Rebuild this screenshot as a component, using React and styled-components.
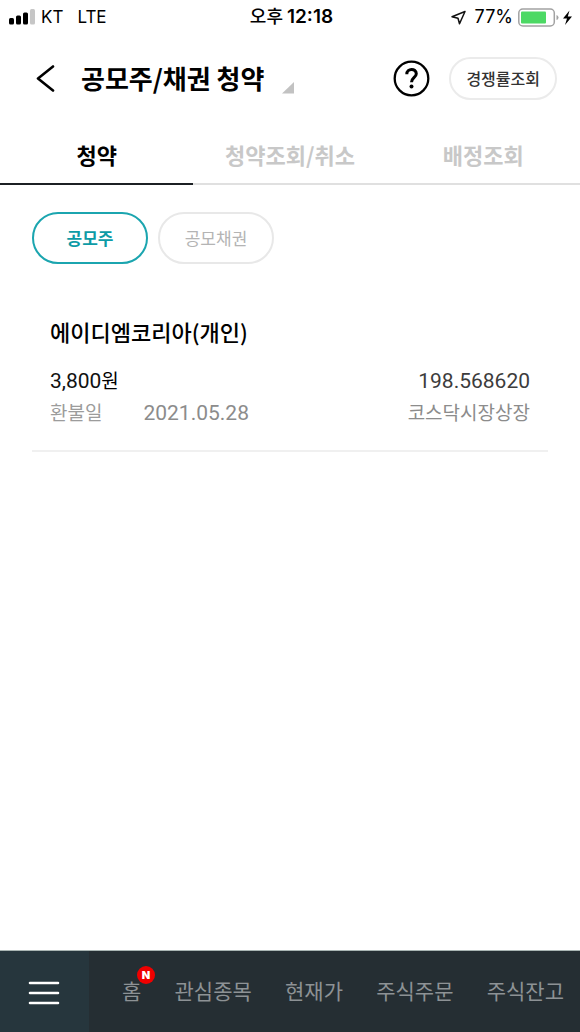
import React from "react";
import styled, { createGlobalStyle } from "styled-components";

const GlobalStyle = createGlobalStyle`
  *, *::before, *::after { box-sizing: border-box; }
  body {
    margin: 0;
    background: #fff;
    color: #000;
    font-family: "Noto Sans CJK KR", sans-serif;
  }
  button { font: inherit; color: inherit; border: 0; background: none; padding: 0; cursor: pointer; }
  h1, h2, p, dl, dt, dd, ul { margin: 0; padding: 0; }
  ul { list-style: none; }
`;

const Screen = styled.div`
  display: flex;
  flex-direction: column;
  min-height: 100vh;
`;

const StatusBar = styled.div`
  display: grid;
  grid-template-columns: 1fr auto 1fr;
  align-items: center;
  height: 32px;
  padding: 0 8px;
  font-family: Inter, "Noto Sans CJK KR", sans-serif;
  font-size: 18px;
  line-height: 34px;
`;

const StatusGroup = styled.div`
  display: flex;
  align-items: center;
  justify-content: ${(p) => (p.$end ? "flex-end" : "flex-start")};
`;

const Carrier = styled.span`
  display: flex;
  gap: 14px;
  margin-left: 6px;
  font-size: 17px;
`;

const Clock = styled.span`
  display: flex;
  gap: 4px;
  padding-left: 3px;
  font-weight: 500;
  strong { font-size: 19px; font-weight: 600; }
`;

const Percent = styled.span`
  margin: 0 5px 0 9px;
`;

const Header = styled.header`
  display: flex;
  align-items: center;
  height: 96px;
  padding: 0 23px 4px 36px;
`;

const BackButton = styled.button`
  display: flex;
  margin-right: 25px;
`;

const TitleButton = styled.button`
  display: flex;
  align-items: flex-end;
  gap: 18px;
  margin-right: auto;
`;

const Title = styled.h1`
  font-size: 26px;
  font-weight: 700;
  line-height: 36px;
`;

const HelpButton = styled.button`
  display: flex;
  margin-right: 19px;
`;

const RateButton = styled.button`
  height: 43px;
  padding: 0 15px;
  border: 2px solid #ebebeb;
  border-radius: 22px;
  color: #333;
  font-size: 16px;
  font-weight: 500;
  line-height: 36px;
`;

const Tabs = styled.nav`
  display: grid;
  grid-template-columns: repeat(3, 1fr);
`;

const Tab = styled.button`
  height: 57px;
  padding-bottom: 4px;
  border-bottom: 2px solid ${(p) => (p.$active ? "#1c2024" : "#e0e0e0")};
  color: ${(p) => (p.$active ? "#000" : "#c8c8c8")};
  font-size: 22px;
  font-weight: 700;
  line-height: 32px;
`;

const Main = styled.main`
  flex: 1;
  padding: 27px 32px;
`;

const Chips = styled.div`
  display: flex;
  gap: 10px;
`;

const Chip = styled.button`
  width: 116px;
  height: 52px;
  padding-bottom: 2px;
  border: 2px solid ${(p) => (p.$active ? "#1ba5af" : "#e8e8e8")};
  border-radius: 28px;
  color: ${(p) => (p.$active ? "#0d9ba6" : "#b4b4b4")};
  font-size: 17px;
  font-weight: ${(p) => (p.$active ? 700 : 400)};
`;

const Offering = styled.li`
  margin-top: 49px;
  padding: 0 18px 22px;
  border-bottom: 2px solid #f0f0f0;
`;

const Company = styled.h2`
  font-size: 22px;
  font-weight: 500;
  line-height: 36px;
`;

const Row = styled.div`
  display: flex;
  justify-content: space-between;
  height: 32px;
  margin-top: ${(p) => (p.$first ? "15px" : "0")};
  line-height: 32px;
  font-size: 19px;
`;

const Num = styled.span`
  font-family: Roboto, sans-serif;
  font-size: 21px;
  line-height: 34px;
  color: ${(p) => p.$color};
`;

const Refund = styled.dl`
  display: flex;
  gap: 41px;
  color: #9c9c9c;
`;

const Market = styled.span`
  color: #8c8c8c;
`;

const BottomBar = styled.nav`
  display: flex;
  height: 82px;
  border-top: 1px solid #a9b5b3;
  background: #252e33;
`;

const MenuButton = styled.button`
  display: flex;
  align-items: center;
  justify-content: center;
  width: 89px;
  padding: 2px 2px 0 0;
  background: #26363d;
`;

const Links = styled.div`
  display: flex;
  flex: 1;
  align-items: center;
  justify-content: space-between;
  padding: 0 16px 4px 33px;
`;

const NavLink = styled.a`
  position: relative;
  color: #8d9295;
  font-size: 21px;
  line-height: 32px;
  text-decoration: none;
`;

const NewBadge = styled.span`
  position: absolute;
  top: -8px;
  left: 15px;
  width: 18px;
  height: 18px;
  border-radius: 50%;
  background: #f00000;
  color: #fff;
  font-family: Inter, sans-serif;
  font-size: 11px;
  font-weight: 900;
  line-height: 18px;
  text-align: center;
`;

function Signal() {
  return (
    <svg width="27" height="16" viewBox="0 0 27 16" aria-hidden="true">
      <rect x="1" y="9" width="5" height="6.500" rx="1.500" />
      <rect x="8" y="6.500" width="5" height="9" rx="1.500" />
      <rect x="15" y="3.500" width="5" height="12" rx="1.500" />
      <rect x="22" y="0" width="5" height="15.500" rx="1.500" fill="#c6c6c6" />
    </svg>
  );
}

function LocationArrow() {
  return (
    <svg width="15" height="15" viewBox="0 0 15 15" fill="none" stroke="#111" strokeWidth="1.500" strokeLinejoin="round" aria-hidden="true">
      <path d="M14 1.500 1 6.800 7 8.200 8.500 13.800Z" />
    </svg>
  );
}

function Battery() {
  return (
    <svg width="54" height="19" viewBox="0 0 54 19" aria-hidden="true">
      <rect x="0.800" y="1" width="35.500" height="17" rx="4" fill="none" stroke="#a2a2a2" strokeWidth="1.500" />
      <rect x="3" y="3.500" width="25" height="12" rx="1" fill="#4cd964" />
      <path d="M38.500 7Q40.500 7.500 40.500 9.500T38.500 12Z" fill="#a2a2a2" />
      <path d="M51.500 2.500 45 10.500H49L47 17 54 8.500H49.800Z" fill="#000" />
    </svg>
  );
}

function BackIcon() {
  return (
    <svg width="20" height="28" viewBox="0 0 20 28" fill="none" stroke="#000" strokeWidth="2.600" strokeLinecap="round" strokeLinejoin="round" aria-hidden="true">
      <path d="M17 2.500 2 14.500 17 26.500" />
    </svg>
  );
}

function CornerIcon() {
  return (
    <svg width="12" height="14" viewBox="0 0 12 14" aria-hidden="true">
      <path d="M12 0V11.500H0Z" fill="#c2c2c2" />
    </svg>
  );
}

function HelpIcon() {
  return (
    <svg width="37" height="37" viewBox="0 0 37 37" fill="none" stroke="#000" aria-hidden="true">
      <circle cx="18.500" cy="18.500" r="16.800" strokeWidth="2.300" />
      <path d="M13.800 14.200C13.800 7.900 23.300 7.900 23.300 13.800C23.300 17.400 18.500 17.600 18.500 22.300" strokeWidth="3" />
      <circle cx="18.500" cy="26.500" r="2" fill="#000" stroke="none" />
    </svg>
  );
}

function MenuIcon() {
  return (
    <svg width="34" height="24" viewBox="0 0 34 24" stroke="#fff" strokeWidth="2.600" strokeLinecap="round" aria-hidden="true">
      <path d="M3 2H31M3 12H31M3 22H31" />
    </svg>
  );
}

const tabs = ["청약", "청약조회/취소", "배정조회"];
const kinds = ["공모주", "공모채권"];
const links = [
  { label: "홈", isNew: true },
  { label: "관심종목" },
  { label: "현재가" },
  { label: "주식주문" },
  { label: "주식잔고" },
];

export default function App() {
  return (
    <Screen>
      <GlobalStyle />
      <StatusBar>
        <StatusGroup>
          <Signal />
          <Carrier>
            <span>KT</span>
            <span>LTE</span>
          </Carrier>
        </StatusGroup>
        <Clock>
          오후 <strong>12:18</strong>
        </Clock>
        <StatusGroup $end>
          <LocationArrow />
          <Percent>77%</Percent>
          <Battery />
        </StatusGroup>
      </StatusBar>
      <Header>
        <BackButton aria-label="뒤로">
          <BackIcon />
        </BackButton>
        <TitleButton>
          <Title>공모주/채권 청약</Title>
          <CornerIcon />
        </TitleButton>
        <HelpButton aria-label="도움말">
          <HelpIcon />
        </HelpButton>
        <RateButton>경쟁률조회</RateButton>
      </Header>
      <Tabs>
        {tabs.map((label, i) => (
          <Tab key={label} $active={i === 0}>
            {label}
          </Tab>
        ))}
      </Tabs>
      <Main>
        <Chips>
          {kinds.map((label, i) => (
            <Chip key={label} $active={i === 0}>
              {label}
            </Chip>
          ))}
        </Chips>
        <ul>
          <Offering>
            <Company>에이디엠코리아(개인)</Company>
            <Row $first>
              <span>
                <Num $color="#111">3,800</Num>원
              </span>
              <Num $color="#3c3c3c">198.568620</Num>
            </Row>
            <Row>
              <Refund>
                <dt>환불일</dt>
                <dd>
                  <Num $color="#8c8c8c">2021.05.28</Num>
                </dd>
              </Refund>
              <Market>코스닥시장상장</Market>
            </Row>
          </Offering>
        </ul>
      </Main>
      <BottomBar>
        <MenuButton aria-label="메뉴">
          <MenuIcon />
        </MenuButton>
        <Links>
          {links.map((link) => (
            <NavLink key={link.label} href="#">
              {link.label}
              {link.isNew && <NewBadge>N</NewBadge>}
            </NavLink>
          ))}
        </Links>
      </BottomBar>
    </Screen>
  );
}
